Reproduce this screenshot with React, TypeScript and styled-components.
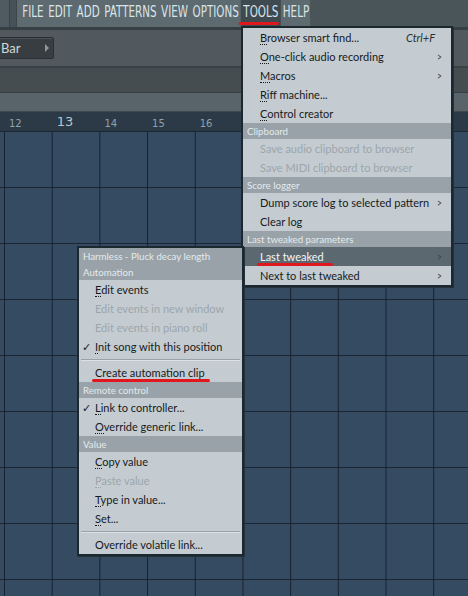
import React from 'react'
import styled, { createGlobalStyle } from 'styled-components'

const GlobalStyle = createGlobalStyle`
	html, body {
		margin: 0;
		padding: 0;
		background: #34495f;
	}
	* {
		box-sizing: border-box;
	}
`

const UI_FONT = `Lato, "Noto Sans", sans-serif`
const CONDENSED = `"DejaVu Sans", "Liberation Sans", sans-serif`

const Screen = styled.div`
	position: relative;
	width: 468px;
	height: 596px;
	overflow: hidden;
	display: flex;
	flex-direction: column;
	background: #34495f;
	font-family: ${UI_FONT};
`

const TopBar = styled.div`
	height: 30px;
	display: flex;
	background: #4a555a;
	border-bottom: 3px solid #363f44;
`

const LeftStub = styled.div`
	width: 17px;
	border-right: 1px solid #3b454a;
	box-shadow: inset -6px 0 0 #46525a, inset -7px 0 0 #39434a;
	background: #4f5b61;
`

const MainMenu = styled.nav`
	width: 293px;
	padding-left: 3px;
	background: #5d6a70;
`

// the menu font in the picture is a condensed face, squeeze a regular one
const WordStrip = styled.div`
	display: flex;
	align-items: flex-start;
	transform: scaleX(0.69);
	transform-origin: left top;
	font-family: ${CONDENSED};
	font-size: 15px;
	color: #d9e4e8;
`

const MenuWord = styled.div<{ $open?: boolean }>`
	position: relative;
	height: 26px;
	line-height: 24px;
	padding: 0 3.3px;
	background: ${({ $open }) => ($open ? '#3e4a50' : 'transparent')};
`

const RedMark = styled.span<{ $left: number; $width: number; $top: number }>`
	position: absolute;
	left: ${({ $left }) => $left}px;
	top: ${({ $top }) => $top}px;
	width: ${({ $width }) => $width}px;
	height: 3px;
	border-radius: 2px;
	background: #e0171c;
	z-index: 5;
`

const Toolbar = styled.div`
	height: 38px;
	display: flex;
	align-items: center;
	background: #51595e;
	border-bottom: 2px solid #3a4145;
`

const SnapButton = styled.div`
	width: 64px;
	height: 22px;
	margin-left: -10px;
	display: flex;
	align-items: center;
	justify-content: space-between;
	padding: 0 4px 0 10px;
	background: #373d41;
	border: 1px solid #2a2f33;
	border-radius: 2px;
	box-shadow: inset 0 1px 0 #4b5256;
	color: #cfd6da;
	font-family: ${UI_FONT};
	font-size: 13px;
`

const Caret = styled.span`
	width: 0;
	height: 0;
	border-top: 4px solid transparent;
	border-bottom: 4px solid transparent;
	border-left: 4px solid #8d979c;
`

const Band = styled.div<{ $h: number; $bg: string; $line: string }>`
	height: ${({ $h }) => $h}px;
	background: ${({ $bg }) => $bg};
	border-bottom: 1px solid ${({ $line }) => $line};
`

const Ruler = styled.div`
	height: 20px;
	display: flex;
	align-items: flex-end;
	background: #2c3946;
	border-bottom: 1px solid #1c2732;
	padding-left: 5px;
`

const Tick = styled.div<{ $major?: boolean }>`
	width: 47.7px;
	flex: none;
	padding-left: 4px;
	padding-bottom: 2px;
	font-family: ${CONDENSED};
	font-size: ${({ $major }) => ($major ? 13 : 10)}px;
	color: ${({ $major }) => ($major ? '#b8c6d0' : '#8fa1ae')};
`

const Grid = styled.div`
	flex: 1;
	background-color: #354b62;
	background-image:
		linear-gradient(to right, #16222f 0, #16222f 1px, transparent 1px),
		linear-gradient(to bottom, #1a2634 0, #1a2634 1px, transparent 1px);
	background-size: 47.7px 56px, 47.7px 56px;
	background-position: 4px 55px, 4px 55px;
`

const Panel = styled.div<{ $x: number; $y: number; $w: number; $z: number }>`
	position: absolute;
	left: ${({ $x }) => $x}px;
	top: ${({ $y }) => $y}px;
	width: ${({ $w }) => $w}px;
	z-index: ${({ $z }) => $z};
	background: #c4ccd1;
	border: 2px solid #1c2830;
	box-shadow: 1px 1px 0 #24313a;
	font-family: ${UI_FONT};
	display: flex;
	flex-direction: column;
`

const Header = styled.div`
	height: 16px;
	line-height: 16px;
	padding-left: 4px;
	background: #98a2a8;
	color: #e4eaed;
	font-size: 9.7px;
	white-space: nowrap;
	overflow: hidden;
`

const Row = styled.div<{ $pad: number; $disabled?: boolean; $active?: boolean }>`
	position: relative;
	height: 19px;
	display: flex;
	align-items: center;
	padding-left: ${({ $pad }) => $pad}px;
	padding-right: 8px;
	font-size: 11px;
	white-space: nowrap;
	color: ${({ $disabled, $active }) =>
		$active ? '#f2f6f8' : $disabled ? '#9ba6ac' : '#161a1d'};
	background: ${({ $active }) => ($active ? '#5b6870' : 'transparent')};
`

const Check = styled.span`
	position: absolute;
	left: 3px;
	font-size: 11px;
`

const Label = styled.span`
	flex: 1;
`

const Acc = styled.span`
	border-bottom: 1px dotted currentColor;
	line-height: 11px;
`

const Shortcut = styled.span`
	font-style: italic;
	color: #2a3035;
	margin-right: 8px;
`

const Arrow = styled.span`
	font-size: 12px;
	color: #3c4448;
	transform: scaleX(0.7);
`

const Separator = styled.div`
	height: 7px;
	display: flex;
	align-items: center;
	padding: 0 2px;
	&::after {
		content: '';
		flex: 1;
		height: 1px;
		background: #98a2a8;
		box-shadow: 0 1px 0 #dbe1e4;
	}
`

type Entry =
	| { kind: 'header'; text: string }
	| { kind: 'sep' }
	| {
			kind: 'item'
			text: string
			acc?: boolean
			disabled?: boolean
			active?: boolean
			check?: boolean
			sub?: boolean
			shortcut?: string
			mark?: { left: number; width: number }
	  }

const toolsMenu: Entry[] = [
	{ kind: 'item', text: 'Browser smart find...', acc: true, shortcut: 'Ctrl+F' },
	{ kind: 'item', text: 'One-click audio recording', acc: true, sub: true },
	{ kind: 'item', text: 'Macros', acc: true, sub: true },
	{ kind: 'item', text: 'Riff machine...', acc: true },
	{ kind: 'item', text: 'Control creator', acc: true },
	{ kind: 'header', text: 'Clipboard' },
	{ kind: 'item', text: 'Save audio clipboard to browser', disabled: true },
	{ kind: 'item', text: 'Save MIDI clipboard to browser', disabled: true },
	{ kind: 'header', text: 'Score logger' },
	{ kind: 'item', text: 'Dump score log to selected pattern', sub: true },
	{ kind: 'item', text: 'Clear log' },
	{ kind: 'header', text: 'Last tweaked parameters' },
	{ kind: 'item', text: 'Last tweaked', active: true, sub: true, mark: { left: 14, width: 76 } },
	{ kind: 'item', text: 'Next to last tweaked', sub: true },
]

const contextMenu: Entry[] = [
	{ kind: 'header', text: 'Harmless - Pluck decay length' },
	{ kind: 'header', text: 'Automation' },
	{ kind: 'item', text: 'Edit events', acc: true },
	{ kind: 'item', text: 'Edit events in new window', disabled: true },
	{ kind: 'item', text: 'Edit events in piano roll', disabled: true },
	{ kind: 'item', text: 'Init song with this position', acc: true, check: true },
	{ kind: 'sep' },
	{ kind: 'item', text: 'Create automation clip', mark: { left: 13, width: 118 } },
	{ kind: 'header', text: 'Remote control' },
	{ kind: 'item', text: 'Link to controller...', acc: true, check: true },
	{ kind: 'item', text: 'Override generic link...', acc: true },
	{ kind: 'header', text: 'Value' },
	{ kind: 'item', text: 'Copy value', acc: true },
	{ kind: 'item', text: 'Paste value', acc: true, disabled: true },
	{ kind: 'item', text: 'Type in value...', acc: true },
	{ kind: 'item', text: 'Set...', acc: true },
	{ kind: 'sep' },
	{ kind: 'item', text: 'Override volatile link...' },
]

const MenuList = ({ entries, pad }: { entries: Entry[]; pad: number }) => (
	<>
		{entries.map((e, i) => {
			if (e.kind === 'header') return <Header key={i}>{e.text}</Header>
			if (e.kind === 'sep') return <Separator key={i} />
			return (
				<Row key={i} $pad={pad} $disabled={e.disabled} $active={e.active}>
					{e.check && <Check>✓</Check>}
					<Label>
						{e.acc ? (
							<>
								<Acc>{e.text[0]}</Acc>
								{e.text.slice(1)}
							</>
						) : (
							e.text
						)}
					</Label>
					{e.shortcut && <Shortcut>{e.shortcut}</Shortcut>}
					{e.sub && <Arrow>&gt;</Arrow>}
					{e.mark && <RedMark $left={e.mark.left} $width={e.mark.width} $top={16} />}
				</Row>
			)
		})}
	</>
)

const words = ['FILE', 'EDIT', 'ADD', 'PATTERNS', 'VIEW', 'OPTIONS', 'TOOLS', 'HELP']

export default function App() {
	return (
		<Screen>
			<GlobalStyle />
			<TopBar>
				<LeftStub />
				<MainMenu>
					<WordStrip>
						{words.map((w) => (
							<MenuWord key={w} $open={w === 'TOOLS'}>
								{w}
								{w === 'TOOLS' && <RedMark $left={-3} $width={58} $top={22} />}
							</MenuWord>
						))}
					</WordStrip>
				</MainMenu>
			</TopBar>
			<Toolbar>
				<SnapButton>
					Bar
					<Caret />
				</SnapButton>
			</Toolbar>
			<Band $h={25} $bg="#454d51" $line="#363d41" />
			<Band $h={19} $bg="#58636a" $line="#3f484d" />
			<Ruler>
				<Tick>12</Tick>
				<Tick $major>13</Tick>
				<Tick>14</Tick>
				<Tick>15</Tick>
				<Tick>16</Tick>
			</Ruler>
			<Grid />
			<Panel $x={241} $y={26} $w={212} $z={2}>
				<MenuList entries={toolsMenu} pad={17} />
			</Panel>
			<Panel $x={77} $y={246} $w={167} $z={3}>
				<MenuList entries={contextMenu} pad={16} />
			</Panel>
		</Screen>
	)
}
